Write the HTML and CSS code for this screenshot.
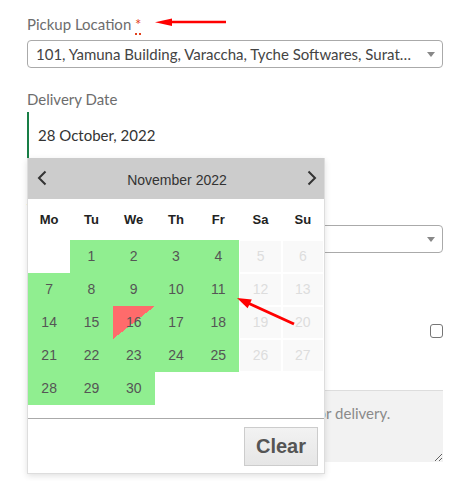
FILE: index.html
```html
<!DOCTYPE html>
<html lang="en">
<head>
    <meta charset="UTF-8">
    <meta name="viewport" content="width=device-width, initial-scale=1.0">
    <title>Checkout - Pickup &amp; Delivery</title>
    <link rel="stylesheet" href="styles.css">
</head>
<body>
    <form class="checkout">
        <div class="field">
            <label class="field-label">Pickup Location <abbr class="required" title="required">*</abbr></label>
            <div class="select">
                <span class="select-text">101, Yamuna Building, Varaccha, Tyche Softwares, Surat, Gujarat</span>
                <span class="select-arrow"></span>
            </div>
        </div>

        <div class="field field-date">
            <label class="field-label">Delivery Date</label>
            <div class="date-input">28 October, 2022</div>

            <!-- datepicker popup -->
            <div class="calendar">
                <div class="cal-header">
                    <svg class="cal-nav" width="10" height="16" viewBox="0 0 10 16"><path d="M8.5 1.5 2 8l6.5 6.5" fill="none" stroke="#333" stroke-width="2"/></svg>
                    <span class="cal-title">November 2022</span>
                    <svg class="cal-nav" width="10" height="16" viewBox="0 0 10 16"><path d="M1.5 1.5 8 8l-6.5 6.5" fill="none" stroke="#333" stroke-width="2"/></svg>
                </div>
                <div class="cal-weekdays">
                    <span>Mo</span><span>Tu</span><span>We</span><span>Th</span><span>Fr</span><span>Sa</span><span>Su</span>
                </div>
                <div class="cal-days">
                    <span class="day empty"></span>
                    <span class="day open">1</span>
                    <span class="day open">2</span>
                    <span class="day open">3</span>
                    <span class="day open">4</span>
                    <span class="day off">5</span>
                    <span class="day off">6</span>

                    <span class="day open">7</span>
                    <span class="day open">8</span>
                    <span class="day open">9</span>
                    <span class="day open">10</span>
                    <span class="day open">11</span>
                    <span class="day off">12</span>
                    <span class="day off">13</span>

                    <span class="day open">14</span>
                    <span class="day open">15</span>
                    <span class="day open partial">16</span>
                    <span class="day open">17</span>
                    <span class="day open">18</span>
                    <span class="day off">19</span>
                    <span class="day off">20</span>

                    <span class="day open">21</span>
                    <span class="day open">22</span>
                    <span class="day open">23</span>
                    <span class="day open">24</span>
                    <span class="day open">25</span>
                    <span class="day off">26</span>
                    <span class="day off">27</span>

                    <span class="day open">28</span>
                    <span class="day open">29</span>
                    <span class="day open">30</span>
                    <span class="day empty"></span>
                    <span class="day empty"></span>
                    <span class="day empty"></span>
                    <span class="day empty"></span>
                </div>
                <div class="cal-footer">
                    <button type="button" class="cal-clear">Clear</button>
                </div>
            </div>
        </div>

        <div class="field field-time">
            <label class="field-label">Time Slot</label>
            <div class="select">
                <span class="select-text">Select a time slot</span>
                <span class="select-arrow"></span>
            </div>
        </div>

        <div class="field field-check">
            <label class="field-label">Ship to a different address?</label>
            <span class="checkbox"></span>
        </div>

        <div class="field">
            <label class="field-label">Order notes</label>
            <textarea class="notes" placeholder="Notes about your order, e.g. special notes for delivery."></textarea>
        </div>
    </form>

    <!-- screenshot annotations -->
    <svg class="annotations" width="471" height="502" viewBox="0 0 471 502">
        <line x1="226" y1="22" x2="168" y2="22" stroke="#f00" stroke-width="2.5"/>
        <polygon points="155,22.3 172,18.6 172,26" fill="#f00"/>
        <line x1="294" y1="324" x2="249" y2="303.5" stroke="#f00" stroke-width="3"/>
        <polygon points="237,298 251.8,299.5 247.6,308.2" fill="#f00"/>
    </svg>
</body>
</html>
```

FILE: styles.css
```css
:root {
    --label-color: #6d6d6d;
    --text-color: #444;
    --border-color: #aaa;
    --open-color: #90ee90;
    --closed-color: #ff6b6b;
}

* {
    margin: 0;
    padding: 0;
    box-sizing: border-box;
}

body {
    position: relative;
    font-family: Lato, "Open Sans", sans-serif;
    font-size: 15px;
    color: var(--text-color);
    background-color: #fff;
}

.checkout {
    padding: 12px 28px 0 27px;
}

.field {
    position: relative;
    margin-bottom: 19px;
}

.field-label {
    display: block;
    line-height: 24px;
    color: var(--label-color);
    margin-bottom: 4px;
}

.required {
    color: #e2401c;
    text-decoration: none;
    border-bottom: 2px dotted #e2401c;
    line-height: 1;
}

/* select2 look-alike */
.select {
    position: relative;
    height: 28px;
    border: 1px solid var(--border-color);
    border-radius: 4px;
    padding: 0 28px 0 8px;
    line-height: 26px;
    color: var(--text-color);
    white-space: nowrap;
}

.select-text {
    display: block;
    overflow: hidden;
    text-overflow: ellipsis;
}

.select-arrow {
    position: absolute;
    right: 7px;
    top: 11px;
    border-style: solid;
    border-width: 5px 4px 0 4px;
    border-color: #888 transparent transparent transparent;
}

.field-date {
    margin-bottom: 39px;
}

.field-date .field-label {
    margin-bottom: 1px;
}

.date-input {
    height: 46px;
    line-height: 46px;
    padding-left: 9px;
    border-left: 2px solid #187e46;
    color: #333;
}

.field-check {
    display: flex;
    justify-content: space-between;
    align-items: center;
    margin-top: 66px;
    margin-bottom: 19px;
}

.field-check .field-label {
    margin-bottom: 0;
}

.checkbox {
    width: 13px;
    height: 14px;
    border: 1px solid #767676;
    border-radius: 3px;
    background: #fff;
}

.notes {
    display: block;
    width: 100%;
    height: 72px;
    padding: 10px;
    background-color: #f2f2f2;
    border: none;
    border-top: 1px solid #ddd;
    font-family: inherit;
    font-size: 15px;
    line-height: 24px;
    color: #444;
    resize: vertical;
}

.notes::placeholder {
    color: #8a8a8a;
}

/* datepicker */
.calendar {
    position: absolute;
    top: 100%;
    left: 0;
    z-index: 10;
    width: 298px;
    background-color: #fff;
    border: 1px solid #ddd;
    border-top: none;
    box-shadow: 0 2px 6px rgba(0, 0, 0, 0.12);
    font-family: "Liberation Sans", Arial, sans-serif;
}

.cal-header {
    height: 41px;
    display: flex;
    align-items: center;
    justify-content: space-between;
    padding: 0 7px 2px 9px;
    background-color: #ccc;
}

.cal-title {
    font-size: 14px;
    color: #333;
    padding-top: 4px;
}

.cal-weekdays,
.cal-days {
    display: grid;
    grid-template-columns: repeat(7, 1fr);
}

.cal-weekdays span {
    height: 41px;
    line-height: 41px;
    text-align: center;
    font-size: 13px;
    font-weight: bold;
    color: #222;
}

.day {
    height: 33px;
    line-height: 33px;
    text-align: center;
    font-size: 14px;
    color: #555;
}

.day.open {
    background-color: var(--open-color);
}

.day.partial {
    background: linear-gradient(to bottom right, var(--closed-color) 50%, var(--open-color) 50%);
}

.day.off {
    background-color: #f9f9f9;
    border: 1px solid #fff;
    line-height: 31px;
    color: #ddd;
}

.cal-footer {
    display: flex;
    justify-content: flex-end;
    margin-top: 13px;
    padding: 8px 6px 7px;
    border-top: 1px solid #aaa;
}

.cal-clear {
    width: 74px;
    height: 39px;
    border: 1px solid #ccc;
    background: linear-gradient(#f2f2f2, #e6e6e6);
    font-family: "Liberation Sans", Arial, sans-serif;
    font-size: 20px;
    font-weight: bold;
    color: #555;
}

.annotations {
    position: absolute;
    top: 0;
    left: 0;
    pointer-events: none;
    z-index: 20;
}
```
